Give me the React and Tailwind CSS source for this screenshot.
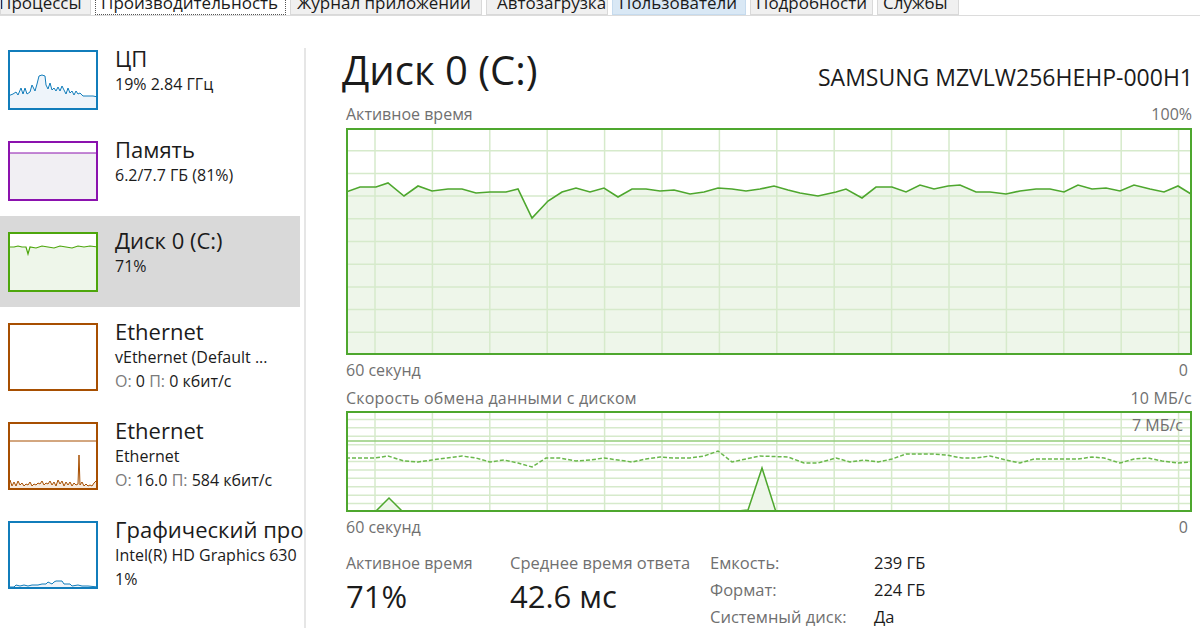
const GREEN = "#4ea72e";
const GRID = "#d6eacb";
const FILL = "#eef6ea";

const tabs = [
  { label: "Процессы", w: "w-[91px]", cls: "bg-[#f0f0f0] border-[#d9d9d9]", pl: "pl-0", tx: "-ml-[2px]" },
  { label: "Производительность", w: "w-[191px]", cls: "bg-white border-dotted border-[#555]", pl: "pl-[5px]", tx: "" },
  { label: "Журнал приложений", w: "w-[192px]", cls: "bg-[#f0f0f0] border-[#d9d9d9]", pl: "pl-[6px]", tx: "" },
  { label: "Автозагрузка", w: "w-[122px]", cls: "bg-[#f0f0f0] border-[#d9d9d9]", pl: "pl-[10px]", tx: "" },
  { label: "Пользователи", w: "w-[134px]", cls: "bg-[#d9e8f5] border-[#c6dbee]", pl: "pl-[6px]", tx: "" },
  { label: "Подробности", w: "w-[123px]", cls: "bg-[#f0f0f0] border-[#d9d9d9]", pl: "pl-[5px]", tx: "" },
  { label: "Службы", w: "w-[82px]", cls: "bg-[#f0f0f0] border-[#d9d9d9]", pl: "pl-[5px]", tx: "" },
];

const toPts = (arr, dx = 0, dy = 0) => arr.map(([x, y]) => `${x - dx},${y - dy}`).join(" ");

const chart1 = [[346,192],[360,187],[376,187],[388,183],[404,196],[418,186],[432,191],[448,189],[462,189],[476,193],[490,192],[506,192],[518,189],[532,218],[548,201],[562,192],[576,188],[590,192],[604,188],[618,197],[632,189],[646,189],[660,191],[674,190],[690,194],[704,192],[718,188],[732,189],[746,191],[760,189],[774,186],[788,190],[800,193],[818,196],[836,192],[846,189],[862,198],[876,187],[892,187],[906,192],[920,185],[934,189],[948,186],[960,185],[976,192],[990,192],[1006,194],[1020,191],[1036,189],[1050,189],[1064,192],[1078,185],[1092,189],[1106,188],[1120,191],[1134,185],[1150,189],[1164,192],[1178,186],[1191,194]];

const chart2 = [[346,458],[375,458],[388,456],[404,461],[418,462],[432,460],[446,458],[462,456],[476,458],[490,462],[504,460],[518,463],[532,467],[546,458],[560,458],[576,461],[590,460],[604,458],[618,460],[632,462],[646,459],[660,457],[674,458],[690,458],[704,456],[718,451],[732,462],[760,456],[788,457],[804,463],[818,463],[836,458],[850,462],[864,460],[878,462],[892,459],[906,454],[920,454],[934,454],[946,455],[962,458],[976,458],[990,456],[1006,460],[1020,463],[1034,459],[1050,459],[1064,459],[1078,459],[1092,457],[1104,458],[1120,463],[1134,459],[1148,458],[1162,461],[1178,463],[1191,462]];

function Grid({ w, h, rows }) {
  const v = [];
  for (let x = 29; x < w; x += 57.4) v.push(x);
  const hz = [];
  for (let i = 1; i < rows; i++) hz.push((h / rows) * i);
  return (
    <g stroke={GRID} strokeWidth="1.5">
      {v.map((x) => (
        <line key={"v" + x} x1={x} y1="0" x2={x} y2={h} />
      ))}
      {hz.map((y) => (
        <line key={"h" + y} x1="0" y1={y} x2={w} y2={y} />
      ))}
    </g>
  );
}

function ActiveChart() {
  const pts = toPts(chart1, 346, 128);
  return (
    <svg width="846" height="227" className="block">
      <polygon points={`0,227 ${pts} 846,227`} fill={FILL} />
      <Grid w={846} h={227} rows={10} />
      <polyline points={pts} fill="none" stroke={GREEN} strokeWidth="1.6" />
      <rect x="1" y="1" width="844" height="225" fill="none" stroke={GREEN} strokeWidth="2" />
    </svg>
  );
}

function TransferChart() {
  const pts = toPts(chart2, 346, 411);
  return (
    <div className="relative">
      <svg width="846" height="101" className="block">
        <Grid w={846} h={101} rows={12} />
        <line x1="0" y1="30" x2="846" y2="30" stroke="#93cc7a" strokeWidth="1.5" />
        <polyline points={pts} fill="none" stroke="#6ab84c" strokeWidth="1.5" strokeDasharray="4 2" />
        <polygon points="29,101 43,87 57,101" fill={FILL} stroke={GREEN} strokeWidth="1.5" />
        <polygon points="392,100 402,99 416,57 430,101" fill={FILL} stroke={GREEN} strokeWidth="1.5" />
        <rect x="1" y="1" width="844" height="99" fill="none" stroke={GREEN} strokeWidth="2" />
      </svg>
      <span className="absolute right-[9px] top-[5px] text-[16px] leading-[18px] text-[#707070]">7 МБ/с</span>
    </div>
  );
}

function Thumb({ kind, color, h }) {
  let inner = null;
  if (kind === "cpu") {
    const d = [[0,46],[5,44],[8,42],[10,45],[13,38],[15,44],[17,38],[19,44],[22,42],[24,35],[27,41],[29,34],[31,26],[34,25],[37,26],[38,35],[40,39],[42,33],[44,40],[46,38],[48,41],[50,37],[52,41],[54,36],[56,40],[58,44],[60,38],[62,43],[64,41],[66,45],[68,41],[70,44],[72,43],[75,46],[80,46],[85,46],[90,47]];
    const p = toPts(d);
    inner = (
      <>
        <polygon points={`0,60 ${p} 90,60`} fill="#eef4fa" />
        <polyline points={p} fill="none" stroke={color} strokeWidth="1" />
      </>
    );
  } else if (kind === "mem") {
    inner = (
      <>
        <rect x="0" y="12" width="90" height="48" fill="#f1eff3" />
        <line x1="0" y1="12" x2="90" y2="12" stroke={color} strokeWidth="1.2" />
      </>
    );
  } else if (kind === "disk") {
    const d = [[0,15],[6,15],[10,14],[14,15],[18,15],[20,22],[22,15],[28,16],[34,14],[40,15],[46,16],[52,14],[58,15],[64,16],[70,14],[76,15],[82,14],[90,15]];
    const p = toPts(d);
    inner = (
      <>
        <polygon points={`0,60 ${p} 90,60`} fill={FILL} />
        <polyline points={p} fill="none" stroke={color} strokeWidth="1.2" />
      </>
    );
  } else if (kind === "eth2") {
    const d = [[0,64],[2,58],[4,64],[6,60],[8,64],[10,59],[12,63],[14,61],[16,64],[18,62],[20,63],[22,60],[24,64],[26,62],[28,63],[30,61],[32,62],[34,59],[36,63],[38,61],[40,62],[42,59],[44,63],[46,60],[48,64],[50,58],[52,62],[54,59],[56,64],[58,60],[60,63],[62,60],[64,64],[66,61],[68,63],[70,62],[71,33],[72,63],[74,60],[76,64],[78,62],[80,64],[82,63],[84,64],[86,61],[88,59],[90,64]];
    const p = toPts(d);
    inner = (
      <>
        <polygon points={`0,68 ${p} 90,68`} fill="#f6ebe0" />
        <line x1="0" y1="19" x2="90" y2="19" stroke={color} strokeWidth="1" />
        <polyline points={p} fill="none" stroke={color} strokeWidth="1" />
      </>
    );
  } else if (kind === "gpu") {
    const d = [[0,66],[6,66],[8,64],[12,65],[16,64],[20,65],[24,64],[30,64],[34,63],[38,63],[40,61],[44,63],[46,61],[48,60],[54,60],[56,63],[58,63],[62,63],[64,65],[70,64],[74,65],[80,65],[90,66]];
    const p = toPts(d);
    inner = (
      <>
        <polygon points={`0,68 ${p} 90,68`} fill="#eef4fa" />
        <polyline points={p} fill="none" stroke={color} strokeWidth="1" />
      </>
    );
  }
  return (
    <svg width="90" height={h} className="block shrink-0">
      <rect x="0" y="0" width="90" height={h} fill="white" />
      {inner}
      <rect x="1" y="1" width="88" height={h - 2} fill="none" stroke={color} strokeWidth="2" />
    </svg>
  );
}

const Gray = ({ children }) => <span className="text-[#7b7b7b]">{children}</span>;

const items = [
  { title: "ЦП", lines: ["19% 2.84 ГГц"], color: "#117dbb", kind: "cpu", h: 60 },
  { title: "Память", lines: ["6.2/7.7 ГБ (81%)"], color: "#8b12ae", kind: "mem", h: 60 },
  { title: "Диск 0 (C:)", lines: ["71%"], color: "#4da60c", kind: "disk", h: 60, selected: true },
  {
    title: "Ethernet",
    lines: ["vEthernet (Default ...", <><Gray>О:</Gray> 0 <Gray>П:</Gray> 0 кбит/с</>],
    color: "#a74f01",
    kind: "eth1",
    h: 68,
  },
  {
    title: "Ethernet",
    lines: ["Ethernet", <><Gray>О:</Gray> 16.0 <Gray>П:</Gray> 584 кбит/с</>],
    color: "#a74f01",
    kind: "eth2",
    h: 68,
  },
  { title: "Графический процессор 0", lines: ["Intel(R) HD Graphics 630", "1%"], color: "#117dbb", kind: "gpu", h: 68 },
];

export default function App() {
  return (
    <div className="w-[1200px] h-[628px] overflow-hidden bg-white text-[#1b1b1b] font-['Open_Sans','Noto_Sans',sans-serif]">
      {/* Tabs (cut off at the top) */}
      <div className="h-[16px] border-b border-[#dcdcdc] overflow-hidden flex gap-[4px] items-end">
        {tabs.map((t) => (
          <div
            key={t.label}
            className={`${t.w} ${t.pl} ${t.cls} h-[15px] border border-t-0 overflow-hidden whitespace-nowrap text-[17px] leading-[17px] shrink-0`}
          >
            <div className={`-mt-[6px] ${t.tx}`}>{t.label}</div>
          </div>
        ))}
      </div>

      <div className="flex h-[612px]">
        {/* Sidebar */}
        <div className="w-[304px] overflow-hidden pt-[18px] shrink-0">
          {items.map((it, i) => (
            <div
              key={i}
              className={`w-[300px] flex items-start gap-[17px] pl-[8px] pt-[16px] ${it.h === 68 ? "h-[99px]" : "h-[91px]"} ${it.selected ? "bg-[#d9d9d9]" : ""}`}
            >
              <Thumb kind={it.kind} color={it.color} h={it.h} />
              <div className="-mt-[5px] whitespace-nowrap">
                <div className="text-[22px] leading-[27px]">{it.title}</div>
                {it.lines.map((l, j) => (
                  <div key={j} className="text-[16px] leading-[24px]">
                    {l}
                  </div>
                ))}
              </div>
            </div>
          ))}
        </div>
        <div className="w-[2px] bg-[#e6e6e6] mt-[32px] shrink-0" />

        {/* Main */}
        <div className="flex-1 pl-[40px] pr-[8px]">
          <div className="flex items-end justify-between h-[88px] pb-[1px]">
            <div className="text-[40px] leading-[44px] -ml-[4px] mb-[11px]">Диск 0 (C:)</div>
            <div className="text-[23px] leading-[26px] mb-[13px] mr-[-1px]">SAMSUNG MZVLW256HEHP-000H1</div>
          </div>
          <div className="flex justify-between h-[24px] pt-[1px] text-[16px] leading-[18px] text-[#707070]">
            <span>Активное время</span>
            <span>100%</span>
          </div>
          <ActiveChart />
          <div className="flex justify-between pt-[6px] h-[34px] text-[16px] leading-[18px] text-[#707070]">
            <span>60 секунд</span>
            <span className="pr-[4px]">0</span>
          </div>
          <div className="flex justify-between h-[22px] text-[16px] leading-[18px] text-[#707070] tracking-[0.2px]">
            <span>Скорость обмена данными с диском</span>
            <span>10 МБ/с</span>
          </div>
          <TransferChart />
          <div className="flex justify-between pt-[6px] h-[41px] text-[16px] leading-[18px] text-[#707070]">
            <span>60 секунд</span>
            <span className="pr-[4px]">0</span>
          </div>

          <div className="flex">
            <div className="w-[164px]">
              <div className="text-[16px] leading-[20px] text-[#707070]">Активное время</div>
              <div className="text-[31px] leading-[46px]">71%</div>
            </div>
            <div className="w-[200px]">
              <div className="text-[16.5px] leading-[20px] text-[#707070]">Среднее время ответа</div>
              <div className="text-[31px] leading-[46px]">42.6 мс</div>
            </div>
            <div className="grid grid-cols-[164px_auto] text-[16.5px] leading-[27px] -mt-[4px]">
              <span className="text-[#707070]">Емкость:</span>
              <span>239 ГБ</span>
              <span className="text-[#707070]">Формат:</span>
              <span>224 ГБ</span>
              <span className="text-[#707070]">Системный диск:</span>
              <span>Да</span>
            </div>
          </div>
        </div>
      </div>
    </div>
  );
}
